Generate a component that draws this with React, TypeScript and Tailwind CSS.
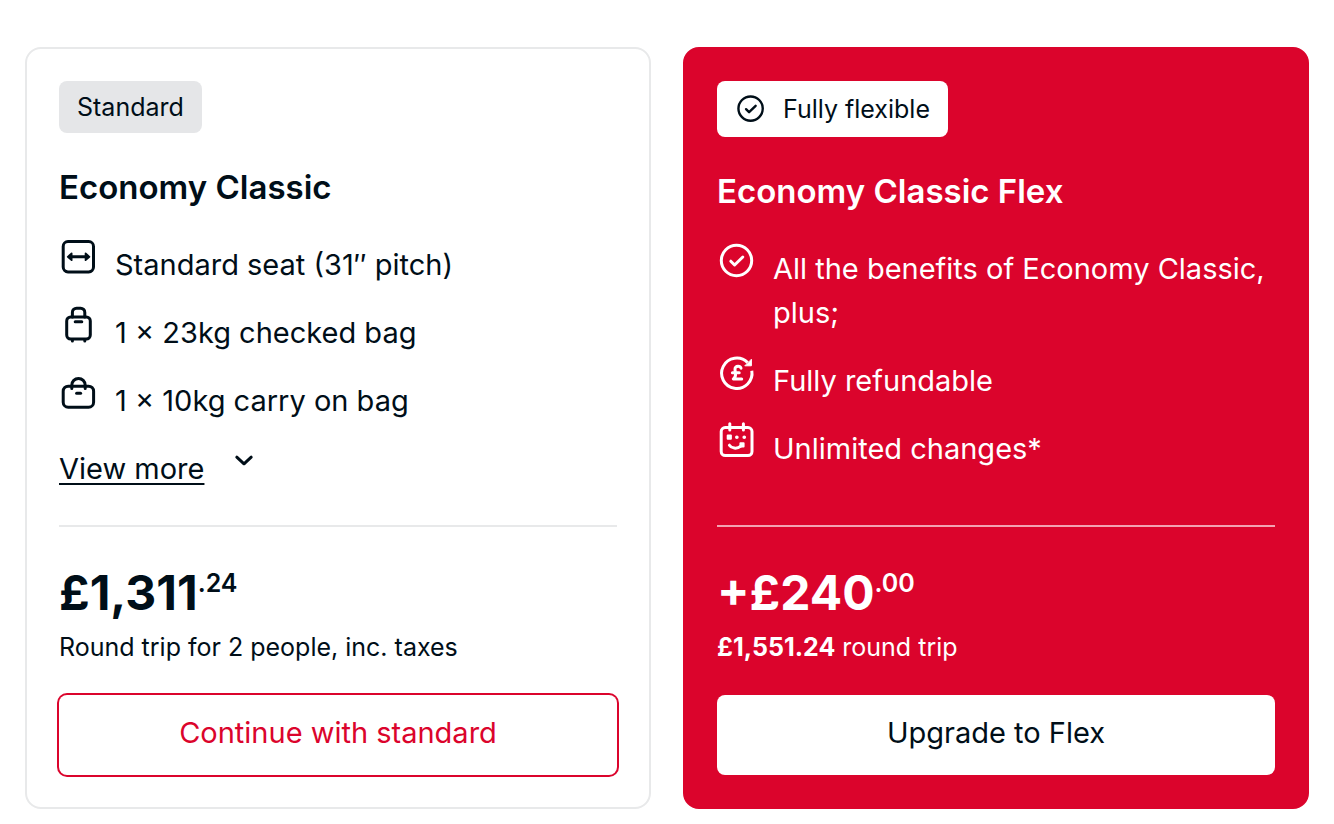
import type { ReactNode } from "react";
import clsx from "clsx";

function Icon({ children, className = "size-10" }: { children: ReactNode; className?: string }) {
  return (
    <svg
      viewBox="0 0 40 40"
      fill="none"
      stroke="currentColor"
      strokeWidth="3"
      strokeLinecap="round"
      strokeLinejoin="round"
      aria-hidden="true"
      className={clsx("shrink-0", className)}
    >
      {children}
    </svg>
  );
}

function SeatIcon() {
  return (
    <Icon>
      <rect x="4.2" y="4.6" width="30.3" height="30.3" rx="4.8" />
      <path d="M11 19.8h17" />
      <path d="M12.6 16.4v6.8L8.8 19.8zM26.6 16.4v6.8l3.8-3.4z" fill="currentColor" strokeWidth="1.8" />
    </Icon>
  );
}

function SuitcaseIcon() {
  return (
    <Icon>
      <rect x="7.7" y="12" width="23.6" height="22" rx="4" />
      <path d="M13.4 12V7.4a4.2 4.2 0 0 1 4.2-4.2h4a4.2 4.2 0 0 1 4.2 4.2V12" />
      <path d="M16.2 16.8h6.6M13.4 34.8V36M25.8 34.8V36" />
    </Icon>
  );
}

function HandBagIcon() {
  return (
    <Icon>
      <rect x="4.2" y="13.2" width="30.4" height="21" rx="5" />
      <path d="M12.8 15.4v-3.2c0-3.8 3-6.8 6.7-6.8s6.7 3 6.7 6.8v3.2" />
      <path d="M17.6 20.2h4" />
    </Icon>
  );
}

function CheckIcon({ className }: { className?: string }) {
  return (
    <Icon className={className}>
      <circle cx="19.5" cy="19.5" r="15.2" />
      <path d="m13.8 20.2 3.8 3.8 8.2-8" />
    </Icon>
  );
}

function RefundIcon() {
  return (
    <Icon>
      <path d="M30.6 9.6A15.2 15.2 0 1 0 34.8 17.8" strokeLinecap="butt" />
      <path d="M34.4 6.6v6.2h-6.2z" fill="currentColor" strokeWidth="1" />
      <path d="M24 15.2c-.4-1.4-1.4-2-2.9-2-2.2 0-3.3 1.4-3.1 3.4l.5 4.4c.2 2-.4 3.8-2.2 5h8.4M15.4 19.8h6.8" />
    </Icon>
  );
}

function CalendarIcon() {
  return (
    <Icon>
      <rect x="4.2" y="6.6" width="30.8" height="28" rx="4" />
      <path d="M12.8 2.8V9M26.4 2.8V9M12.4 24.2c2 3.2 7.4 4.2 11.4 1" />
      <path d="M10.7 14.6h3.2v3.2h-3.2zM23.4 22.2h3.2v3.2h-3.2z" fill="currentColor" strokeWidth="2" />
      <path d="M19.8 16.2h.1M27.2 16.2h.1" strokeWidth="3.6" />
    </Icon>
  );
}

function Feature({ icon, children }: { icon: ReactNode; children: ReactNode }) {
  return (
    <li className="flex gap-4">
      {icon}
      <span className="pt-1.5">{children}</span>
    </li>
  );
}

function Price({ whole, pence }: { whole: string; pence: string }) {
  return (
    <p className="flex text-5xl font-bold leading-[64px]">
      {whole}
      <span className="text-[25px] font-semibold leading-[44px]">{pence}</span>
    </p>
  );
}

function FareCard({ className, children }: { className: string; children: ReactNode }) {
  return (
    <section className={clsx("flex flex-col rounded-2xl border-2 p-8", className)}>
      {children}
    </section>
  );
}

export default function App() {
  return (
    <main className="grid grid-cols-2 gap-8 bg-white px-[25px] pt-[47px] pb-4 font-['Inter','Liberation_Sans',sans-serif] text-[29px] leading-[44px] text-[#000e18]">
      <FareCard className="border-[#e8e9ea]">
        <span className="self-start rounded-lg bg-[#e5e6e8] px-[18px] text-[25px] leading-[52px]">
          Standard
        </span>
        <h2 className="mt-8 text-[33px] font-semibold leading-[44px]">Economy Classic</h2>
        <ul className="mt-7 flex flex-col gap-[18px]">
          <Feature icon={<SeatIcon />}>Standard seat (31″ pitch)</Feature>
          <Feature icon={<SuitcaseIcon />}>1 × 23kg checked bag</Feature>
          <Feature icon={<HandBagIcon />}>1 × 10kg carry on bag</Feature>
        </ul>
        <button type="button" className="mt-6 flex gap-7 self-start">
          <span className="underline decoration-2 underline-offset-4">View more</span>
          <Icon className="size-6">
            <path d="m8 17 12 11 12-11" strokeWidth="5" />
          </Icon>
        </button>
        <div className="mt-auto pt-[34px]">
          <hr className="border-t-2 border-[#e8e9ea]" />
        </div>
        <div className="mt-[34px]">
          <Price whole="£1,311" pence=".24" />
          <p className="mt-1 text-[25px] leading-9">Round trip for 2 people, inc. taxes</p>
        </div>
        <button
          type="button"
          className="mt-[30px] h-20 rounded-lg pb-1 text-[#db042c] ring-2 ring-[#db042c]"
        >
          Continue with standard
        </button>
      </FareCard>

      <FareCard className="border-[#db042c] bg-[#db042c] text-white">
        <span className="flex items-center gap-4 self-start rounded-lg bg-white px-[18px] text-[25px] leading-[56px] text-[#000e18]">
          <CheckIcon className="size-8" />
          Fully flexible
        </span>
        <h2 className="mt-8 text-[33px] font-semibold leading-[44px]">Economy Classic Flex</h2>
        <ul className="mt-7 flex flex-col gap-[18px]">
          <Feature icon={<CheckIcon />}>All the benefits of Economy Classic, plus;</Feature>
          <Feature icon={<RefundIcon />}>Fully refundable</Feature>
          <Feature icon={<CalendarIcon />}>Unlimited changes*</Feature>
        </ul>
        <div className="mt-auto pt-[34px]">
          <hr className="border-t-2 border-[#f3a3b2]" />
        </div>
        <div className="mt-[34px]">
          <Price whole="+£240" pence=".00" />
          <p className="mt-1 text-[25px] leading-9">
            <strong className="font-bold">£1,551.24</strong> round trip
          </p>
        </div>
        <button type="button" className="mt-[30px] h-20 rounded-lg bg-white pb-1 text-[#000e18]">
          Upgrade to Flex
        </button>
      </FareCard>
    </main>
  );
}
